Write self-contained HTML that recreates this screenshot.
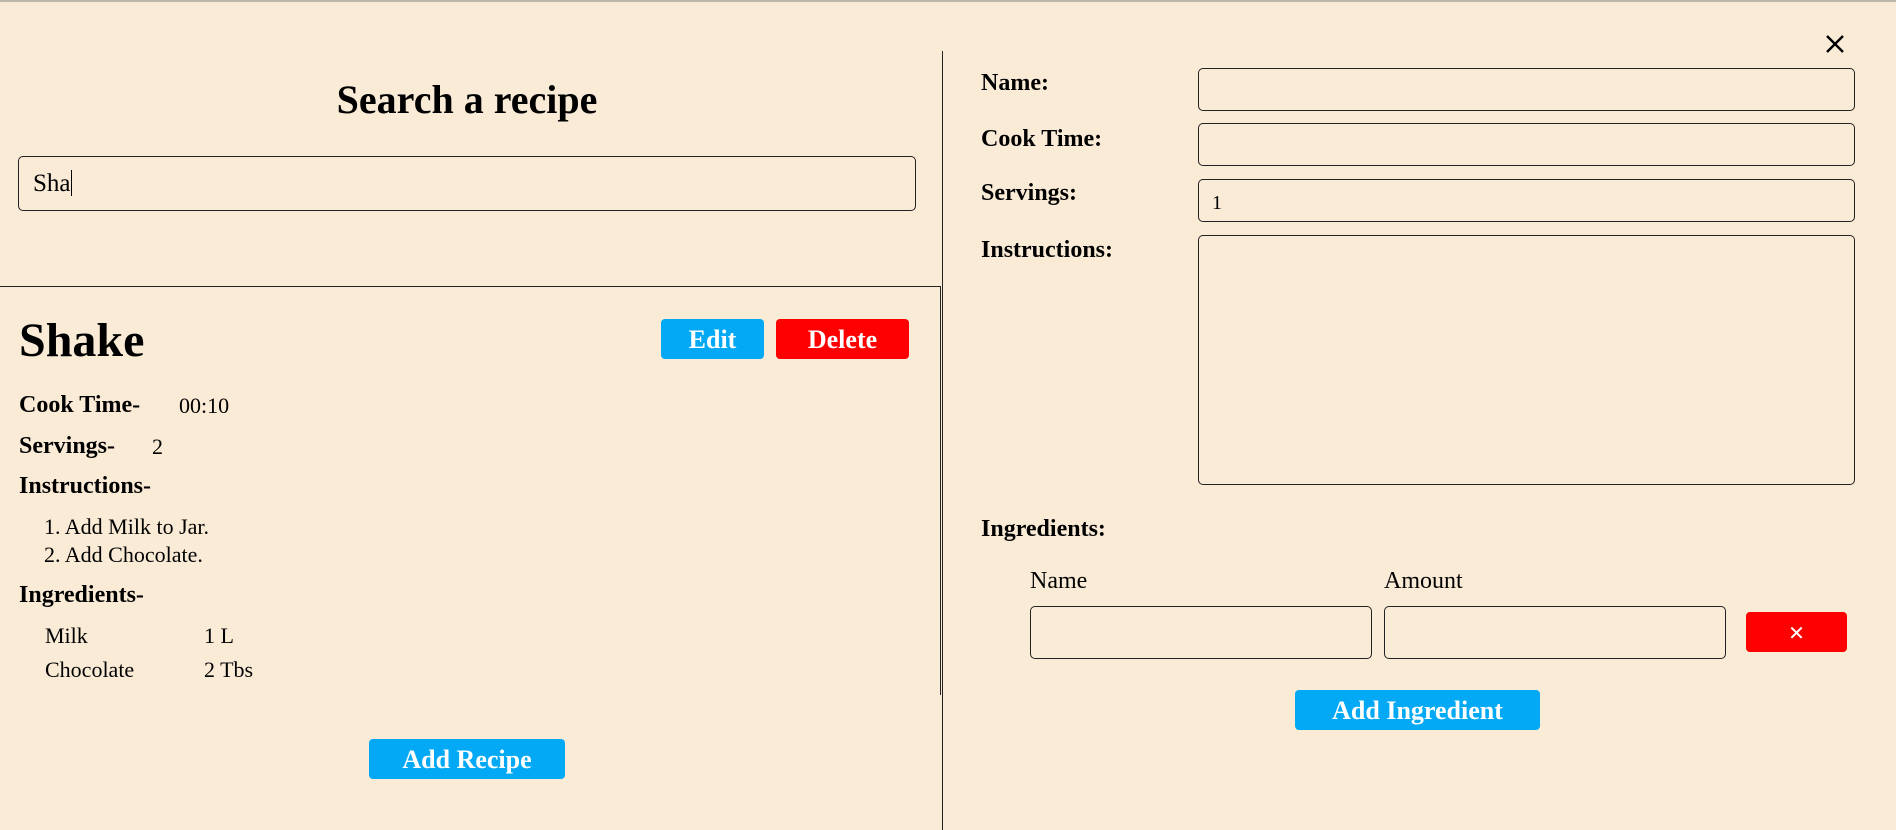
<!DOCTYPE html>
<html><head><meta charset="utf-8"><style>
*{box-sizing:border-box;margin:0;padding:0}
body{width:1896px;height:830px;background:#faebd7;font-family:"Liberation Serif","DejaVu Serif",serif;color:#000;position:relative;overflow:hidden}
.a{position:absolute;white-space:nowrap}
.inp{position:absolute;border:1.5px solid #222;border-radius:5px}
.btn{position:absolute;border-radius:4px;color:#fff;font-weight:bold;display:flex;align-items:center;justify-content:center;font-size:26px;padding-top:2px}
.blue{background:#03a9f4}.red{background:#ff0000}
.lb{font-weight:bold;font-size:24px}
.v{font-size:22px}
</style></head><body>
<div class="a" style="left:0;top:0;width:1896px;height:2px;background:#bdb6aa"></div>
<div class="a" style="left:942px;top:51px;width:1.2px;height:779px;background:#222"></div>
<div class="a" style="left:0;top:286px;width:941px;height:1.2px;background:#222"></div>
<div class="a" style="left:940px;top:286px;width:1.2px;height:409px;background:#222"></div>

<div class="a" style="left:0;width:934px;top:76px;text-align:center;font-weight:bold;font-size:40px">Search a recipe</div>
<div class="inp" style="left:18px;top:156px;width:898px;height:55px"></div>
<div class="a" style="left:33px;top:170px;font-size:25px">Sha<span style="display:inline-block;width:1px;height:26px;background:#000;vertical-align:-5px"></span></div>

<div class="a" style="left:19px;top:313px;font-weight:bold;font-size:48px">Shake</div>
<div class="btn blue" style="left:661px;top:319px;width:103px;height:40px">Edit</div>
<div class="btn red" style="left:776px;top:319px;width:133px;height:40px">Delete</div>

<div class="a lb" style="left:19px;top:392px">Cook Time-</div><div class="a v" style="left:179px;top:393px">00:10</div>
<div class="a lb" style="left:19px;top:433px">Servings-</div><div class="a v" style="left:152px;top:434px">2</div>
<div class="a lb" style="left:19px;top:473px">Instructions-</div>
<div class="a v" style="left:44px;top:514px">1. Add Milk to Jar.</div>
<div class="a v" style="left:44px;top:542px">2. Add Chocolate.</div>
<div class="a lb" style="left:19px;top:582px">Ingredients-</div>
<div class="a v" style="left:45px;top:623px">Milk</div><div class="a v" style="left:204px;top:623px">1 L</div>
<div class="a v" style="left:45px;top:657px">Chocolate</div><div class="a v" style="left:204px;top:657px">2 Tbs</div>
<div class="btn blue" style="left:369px;top:739px;width:196px;height:40px">Add Recipe</div>

<svg class="a" style="left:1825px;top:34px" width="20" height="20" viewBox="0 0 20 20"><path d="M2 2L18 18M18 2L2 18" stroke="#000" stroke-width="2.4"/></svg>

<div class="a lb" style="left:981px;top:70px">Name:</div>
<div class="a lb" style="left:981px;top:126px">Cook Time:</div>
<div class="a lb" style="left:981px;top:180px">Servings:</div>
<div class="a lb" style="left:981px;top:237px">Instructions:</div>
<div class="inp" style="left:1198px;top:68px;width:657px;height:43px"></div>
<div class="inp" style="left:1198px;top:123px;width:657px;height:43px"></div>
<div class="inp" style="left:1198px;top:179px;width:657px;height:43px"></div>
<div class="a v" style="left:1212px;top:192px;font-size:20px">1</div>
<div class="inp" style="left:1198px;top:235px;width:657px;height:250px"></div>

<div class="a lb" style="left:981px;top:516px">Ingredients:</div>
<div class="a v" style="left:1030px;top:568px;font-size:24px">Name</div>
<div class="a v" style="left:1384px;top:568px;font-size:24px">Amount</div>
<div class="inp" style="left:1030px;top:606px;width:342px;height:53px"></div>
<div class="inp" style="left:1384px;top:606px;width:342px;height:53px"></div>
<div class="btn red" style="left:1746px;top:612px;width:101px;height:40px;font-family:'Liberation Sans',sans-serif;font-weight:normal;font-size:20px">✕</div>
<div class="btn blue" style="left:1295px;top:690px;width:245px;height:40px">Add Ingredient</div>
</body></html>
